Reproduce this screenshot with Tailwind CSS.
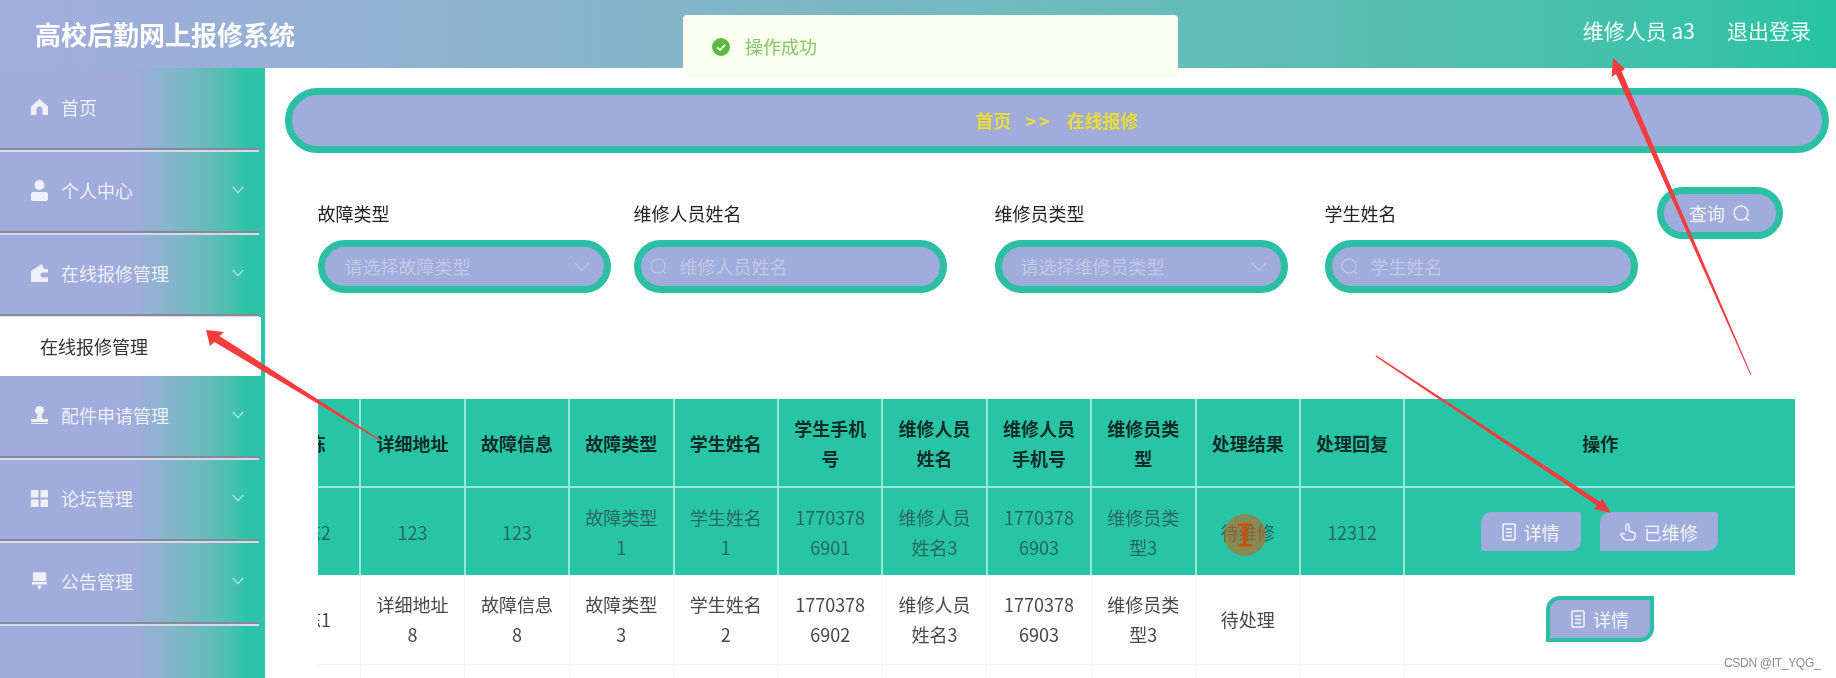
<!DOCTYPE html>
<html lang="zh">
<head>
<meta charset="utf-8">
<title>高校后勤网上报修系统</title>
<script src="https://cdn.jsdelivr.net/npm/@tailwindcss/browser@4"></script>
</head>
<body class="bg-white">
<div class="relative w-[1836px] h-[678px] overflow-hidden bg-white font-['Noto_Sans_CJK_SC','Noto_Sans',sans-serif] blur-[0.4px]">

  <header class="h-[68px] flex items-center justify-between pl-[35px] pr-[25px] bg-linear-to-r from-[#a2acde] to-[#25c3a3]">
    <h1 class="text-[26px] font-bold text-white leading-none">高校后勤网上报修系统</h1>
    <div class="flex items-center gap-[32px] text-[21px] text-[#f0fbf8] leading-none -mt-[8px]">
      <span>维修人员 a3</span>
      <span>退出登录</span>
    </div>
  </header>

  <div class="flex h-[610px]">
    <aside class="w-[265px] shrink-0 bg-linear-to-r from-[#a0acdc] from-[50%] to-[#2cc3a8] to-[93%] text-[18px] text-[#eef1fa]">
      <div class="h-[83px] flex flex-col">
        <div class="flex-1 flex items-center pl-[31px] pr-[20px] pb-[2px]">
          <svg class="w-[17px] h-[16px]" viewBox="0 0 17 16" fill="#eef1fa"><path d="M8.5 0 17 7.5V16h-5.5v-5.5a3 3 0 0 0-6 0V16H0V7.5Z"/></svg>
          <span class="ml-[13px]">首页</span>
        </div>
        <div class="h-[4px] w-[259px] -mb-[1px] bg-[#d5d9e8] border-t-2 border-[#868a98]"></div>
      </div>
      <div class="h-[83px] flex flex-col">
        <div class="flex-1 flex items-center pl-[31px] pr-[20px] pb-[2px]">
          <svg class="w-[17px] h-[21px]" viewBox="0 0 17 21" fill="#eef1fa"><circle cx="8.5" cy="5" r="5"/><path d="M2 12h13a2 2 0 0 1 2 2v5a2 2 0 0 1-2 2H2a2 2 0 0 1-2-2v-5a2 2 0 0 1 2-2Z"/></svg>
          <span class="ml-[13px]">个人中心</span>
          <svg class="ml-auto mr-[1px] w-[12px] h-[8px]" viewBox="0 0 14 9" fill="none" stroke="#b4ebdf" stroke-width="1.300"><path d="M1 1l6 6.5L13 1"/></svg>
        </div>
        <div class="h-[4px] w-[259px] -mb-[1px] bg-[#d5d9e8] border-t-2 border-[#868a98]"></div>
      </div>
      <div class="h-[83px] flex flex-col">
        <div class="flex-1 flex items-center pl-[31px] pr-[20px] pb-[2px]">
          <svg class="w-[17px] h-[18px]" viewBox="0 0 17 18" fill="#eef1fa"><path d="M0 7 11 0l2 5h4v3.500h-5a2.500 2.500 0 0 0 0 5h5V18H0Z"/></svg>
          <span class="ml-[13px]">在线报修管理</span>
          <svg class="ml-auto mr-[1px] w-[12px] h-[8px]" viewBox="0 0 14 9" fill="none" stroke="#b4ebdf" stroke-width="1.300"><path d="M1 1l6 6.5L13 1"/></svg>
        </div>
        <div class="h-[4px] w-[259px] -mb-[1px] bg-[#d5d9e8] border-t-2 border-[#868a98]"></div>
      </div>
      <div class="relative h-[59px] w-[261px] bg-white flex items-center pl-[40px] text-[#333]">在线报修管理</div>
      <div class="h-[83px] flex flex-col">
        <div class="flex-1 flex items-center pl-[31px] pr-[20px] pb-[2px]">
          <svg class="w-[17px] h-[18px]" viewBox="0 0 17 18" fill="#eef1fa"><circle cx="8.500" cy="4.500" r="4.500"/><path d="M6.500 8h4l1 5H17v3H0v-3h5.500Z"/><rect y="17" width="17" height="1"/></svg>
          <span class="ml-[13px]">配件申请管理</span>
          <svg class="ml-auto mr-[1px] w-[12px] h-[8px]" viewBox="0 0 14 9" fill="none" stroke="#b4ebdf" stroke-width="1.300"><path d="M1 1l6 6.5L13 1"/></svg>
        </div>
        <div class="h-[4px] w-[259px] -mb-[1px] bg-[#d5d9e8] border-t-2 border-[#868a98]"></div>
      </div>
      <div class="h-[83px] flex flex-col">
        <div class="flex-1 flex items-center pl-[31px] pr-[20px] pb-[2px]">
          <svg class="w-[17px] h-[17px]" viewBox="0 0 17 17" fill="#eef1fa"><rect width="7.500" height="7.500" rx="0.500"/><rect x="9.500" width="7.500" height="7.500" rx="0.500"/><rect y="9.500" width="7.500" height="7.500" rx="0.500"/><rect x="9.500" y="9.500" width="7.500" height="7.500" rx="0.500"/></svg>
          <span class="ml-[13px]">论坛管理</span>
          <svg class="ml-auto mr-[1px] w-[12px] h-[8px]" viewBox="0 0 14 9" fill="none" stroke="#b4ebdf" stroke-width="1.300"><path d="M1 1l6 6.5L13 1"/></svg>
        </div>
        <div class="h-[4px] w-[259px] -mb-[1px] bg-[#d5d9e8] border-t-2 border-[#868a98]"></div>
      </div>
      <div class="h-[83px] flex flex-col">
        <div class="flex-1 flex items-center pl-[31px] pr-[20px] pb-[2px]">
          <svg class="w-[15px] h-[20px] mx-[1px]" viewBox="0 0 17 20" fill="#eef1fa"><path d="M1 0h15v10H1Z"/><path d="M0 11h17v3H0Z"/><path d="M6.500 15h4v2l-2 3-2-3Z"/></svg>
          <span class="ml-[13px]">公告管理</span>
          <svg class="ml-auto mr-[1px] w-[12px] h-[8px]" viewBox="0 0 14 9" fill="none" stroke="#b4ebdf" stroke-width="1.300"><path d="M1 1l6 6.5L13 1"/></svg>
        </div>
        <div class="h-[4px] w-[259px] -mb-[1px] bg-[#d5d9e8] border-t-2 border-[#868a98]"></div>
      </div>
    </aside>

    <main class="flex-1 min-w-0">
      <div class="mt-[20px] ml-[20px] w-[1544px] h-[65px] rounded-full border-[7px] border-[#2dbfa4] bg-[#a0acdb] flex items-center justify-center text-[18px] font-bold text-[#e8dc3a] gap-[14px]">
        <span>首页</span>
        <span class="tracking-[3px]">&gt;&gt;</span>
        <span>在线报修</span>
      </div>

      <form class="mt-[34px] ml-[52.500px] flex items-start text-[18px]">
        <div class="w-[293px]">
          <div class="h-[53px] flex items-center text-[#222]">故障类型</div>
          <div class="h-[53px] rounded-full border-[7px] border-[#2dbfa4] bg-[#a0acdb] flex items-center pl-[20px] pr-[14px] text-[#c3c8e4]">
            <span>请选择故障类型</span>
            <svg class="ml-auto w-[16px] h-[10px]" viewBox="0 0 16 10" fill="none" stroke="#bcc3e3" stroke-width="1.400"><path d="M1 1l7 7.500L15 1"/></svg>
          </div>
        </div>
        <div class="w-[313px] ml-[23px]">
          <div class="h-[53px] flex items-center text-[#222]">维修人员姓名</div>
          <div class="h-[53px] rounded-full border-[7px] border-[#2dbfa4] bg-[#a0acdb] flex items-center pl-[9px] text-[#c3c8e4]">
            <svg class="w-[17px] h-[17px]" viewBox="0 0 17 17" fill="none" stroke="#bcc3e3" stroke-width="1.400"><circle cx="8" cy="8" r="7"/><path d="M13 13l3 3"/></svg>
            <span class="ml-[13px]">维修人员姓名</span>
          </div>
        </div>
        <div class="w-[293px] ml-[48px]">
          <div class="h-[53px] flex items-center text-[#222]">维修员类型</div>
          <div class="h-[53px] rounded-full border-[7px] border-[#2dbfa4] bg-[#a0acdb] flex items-center pl-[19px] pr-[14px] text-[#c3c8e4]">
            <span>请选择维修员类型</span>
            <svg class="ml-auto w-[16px] h-[10px]" viewBox="0 0 16 10" fill="none" stroke="#bcc3e3" stroke-width="1.400"><path d="M1 1l7 7.500L15 1"/></svg>
          </div>
        </div>
        <div class="w-[313px] ml-[37px]">
          <div class="h-[53px] flex items-center text-[#222]">学生姓名</div>
          <div class="h-[53px] rounded-full border-[7px] border-[#2dbfa4] bg-[#a0acdb] flex items-center pl-[9px] text-[#c3c8e4]">
            <svg class="w-[17px] h-[17px]" viewBox="0 0 17 17" fill="none" stroke="#bcc3e3" stroke-width="1.400"><circle cx="8" cy="8" r="7"/><path d="M13 13l3 3"/></svg>
            <span class="ml-[13px]">学生姓名</span>
          </div>
        </div>
        <button type="button" class="w-[126px] h-[52px] ml-[19px] rounded-full border-[7px] border-[#2dbfa4] bg-[#a0acdb] flex items-center justify-center gap-[8px] text-[#f4f6fc]">
          <span>查询</span>
          <svg class="w-[17px] h-[17px]" viewBox="0 0 17 17" fill="none" stroke="#f4f6fc" stroke-width="1.400"><circle cx="8" cy="8" r="7"/><path d="M13 13l3 3"/></svg>
        </button>
      </form>

      <div class="mt-[106px] ml-[53px] w-[1477px] overflow-hidden">
        <table class="table-fixed border-collapse w-[1539.400px] -ml-[62px] text-[18px] leading-[30px] text-center">
          <colgroup>
            <col class="w-[104.400px]"><col class="w-[104.400px]"><col class="w-[104.400px]"><col class="w-[104.400px]"><col class="w-[104.400px]"><col class="w-[104.400px]"><col class="w-[104.400px]"><col class="w-[104.400px]"><col class="w-[104.400px]"><col class="w-[104.400px]"><col class="w-[104.400px]"><col>
          </colgroup>
          <thead class="bg-[#27c4a6] text-[#102a25] font-bold">
            <tr class="h-[88px] [&>th]:border-2 [&>th]:border-[#97e8d6] [&>th]:border-t-0 [&>th:first-child]:border-l-0 [&>th:last-child]:border-r-0">
              <th>楼栋</th><th>详细地址</th><th>故障信息</th><th>故障类型</th><th>学生姓名</th><th>学生手机<br>号</th><th>维修人员<br>姓名</th><th>维修人员<br>手机号</th><th>维修员类<br>型</th><th>处理结果</th><th>处理回复</th><th>操作</th>
            </tr>
          </thead>
          <tbody>
            <tr class="h-[88px] bg-[#27c4a6] text-[#2a665c] [&>td]:border-2 [&>td]:border-[#97e8d6] [&>td]:border-b-0 [&>td:first-child]:border-l-0 [&>td:last-child]:border-r-0">
              <td>楼栋2</td><td>123</td><td>123</td><td>故障类型<br>1</td><td>学生姓名<br>1</td><td>1770378<br>6901</td><td>维修人员<br>姓名3</td><td>1770378<br>6903</td><td>维修员类<br>型3</td>
              <td class="relative">待维修
                <span class="absolute left-[27px] top-[26px] w-[42px] h-[42px] rounded-full bg-[#c8641e]/60 flex items-center justify-center">
                  <svg class="w-[16px] h-[26px]" viewBox="0 0 18 26" fill="#c8500a"><path d="M1 0h16v3h-6v20h6v3H1v-3h6V3H1Z"/></svg>
                </span>
              </td>
              <td>12312</td>
              <td>
                <div class="flex items-center justify-center gap-[19px] text-[#f4f6fc] -ml-[2px]">
                  <span class="w-[100px] h-[39px] bg-[#a0acdb] rounded-[10px_2px_10px_0] flex items-center justify-center gap-[8px]">
                    <svg class="w-[14px] h-[18px]" viewBox="0 0 14 18" fill="none" stroke="#f4f6fc" stroke-width="1.500"><rect x="1" y="1" width="12" height="16" rx="1"/><path d="M4 6h6M4 9.500h6M4 13h6"/></svg>
                    <span>详情</span>
                  </span>
                  <span class="w-[118px] h-[39px] bg-[#a0acdb] rounded-[10px_2px_10px_0] flex items-center justify-center gap-[8px]">
                    <svg class="w-[16px] h-[18px]" viewBox="0 0 16 18" fill="none" stroke="#f4f6fc" stroke-width="1.400"><path d="M6 8V2.500a1.500 1.500 0 0 1 3 0V8l4.500 1.500c1.500.5 2 1.500 1.700 3l-.7 3c-.3 1-1 1.500-2 1.500H6c-1 0-1.500-.4-2-1l-3-4c-.6-.9.6-2.300 2-1.500L5 11"/></svg>
                    <span>已维修</span>
                  </span>
                </div>
              </td>
            </tr>
            <tr class="h-[89px] bg-white text-[#484848] [&>td]:border [&>td]:border-[#f6f7f3] [&>td]:border-t-0 [&>td:first-child]:border-l-0 [&>td:last-child]:border-r-0">
              <td>楼栋1</td><td>详细地址<br>8</td><td>故障信息<br>8</td><td>故障类型<br>3</td><td>学生姓名<br>2</td><td>1770378<br>6902</td><td>维修人员<br>姓名3</td><td>1770378<br>6903</td><td>维修员类<br>型3</td><td>待处理</td><td></td>
              <td>
                <div class="flex justify-center">
                  <span class="w-[108px] h-[46px] bg-[#a0acdb] border-[4px] border-[#2dbfa4] rounded-[14px_0_14px_0] flex items-center justify-center gap-[8px] text-[#f4f6fc]">
                    <svg class="w-[14px] h-[18px]" viewBox="0 0 14 18" fill="none" stroke="#f4f6fc" stroke-width="1.500"><rect x="1" y="1" width="12" height="16" rx="1"/><path d="M4 6h6M4 9.500h6M4 13h6"/></svg>
                    <span>详情</span>
                  </span>
                </div>
              </td>
            </tr>
            <tr class="h-[88px] bg-white [&>td]:border-r [&>td]:border-[#f6f7f3] [&>td:last-child]:border-r-0">
              <td></td><td></td><td></td><td></td><td></td><td></td><td></td><td></td><td></td><td></td><td></td><td></td>
            </tr>
          </tbody>
        </table>
      </div>
    </main>
  </div>

  <div class="absolute left-[683px] top-[15px] w-[495px] h-[63px] rounded-[4px] bg-[#f9feef] flex items-center pl-[29px] gap-[15px] text-[18px] text-[#82c663]">
    <svg class="w-[18px] h-[18px]" viewBox="0 0 18 18"><circle cx="9" cy="9" r="9" fill="#5cb93e"/><path d="M5 9.300l3 2.700 5-5.200" fill="none" stroke="#fff" stroke-width="1.800"/></svg>
    <span>操作成功</span>
  </div>

  <svg class="absolute left-0 top-0 pointer-events-none" width="1836" height="678" viewBox="0 0 1836 678" fill="#f63c3c">
    <polygon points="1613,58 1625,69 1621.500,71 1751.500,375 1750.500,375 1616,74 1611.500,77"/>
    <polygon points="206,330 224,332 219.500,336 380,439.500 379.500,440.500 214.500,342 210,346"/>
    <polygon points="1611,513 1601.500,498 1600.500,502 1376.500,355.500 1375.500,356.500 1597,505.500 1594,509"/>
  </svg>

  <div class="absolute left-[1724px] top-[654px] whitespace-nowrap text-[12px] tracking-[-0.3px] leading-[18px] text-[#8a8a8a] font-['Liberation_Sans',sans-serif]">CSDN @IT_YQG_</div>
</div>
</body>
</html>
